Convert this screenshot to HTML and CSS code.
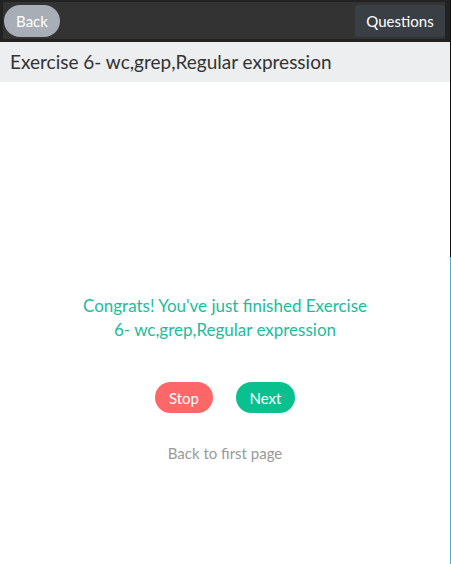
FILE: index.html
```html
<!DOCTYPE html>
<html>
<head>
<meta charset="utf-8">
<link rel="stylesheet" href="styles.css">
</head>
<body>
<div class="app">
  <header class="topbar">
    <button class="btn-back">Back</button>
    <button class="btn-questions">Questions</button>
  </header>
  <div class="titlebar">Exercise 6- wc,grep,Regular expression</div>
  <main class="content">
    <p class="congrats">Congrats! You've just finished Exercise 6- wc,grep,Regular expression</p>
    <div class="actions">
      <button class="pill stop">Stop</button>
      <button class="pill next">Next</button>
    </div>
    <a class="first-page">Back to first page</a>
  </main>
</div>
<div class="edge"></div>
</body>
</html>
```
FILE: styles.css
```css
html, body {
  margin: 0;
  padding: 0;
  background: #fff;
  font-family: Lato, "Open Sans", sans-serif;
}
.app {
  width: 450px;
}
.topbar {
  box-sizing: border-box;
  height: 42px;
  background: #333;
  border-style: solid;
  border-color: #222;
  border-width: 2px 5px 3px 3px;
  display: flex;
  justify-content: space-between;
  align-items: center;
  padding: 0 0 0 1px;
}
.topbar button {
  font-family: inherit;
  font-size: 15px;
  color: #fff;
  border: none;
  height: 32px;
  padding: 0;
  cursor: pointer;
}
.btn-back {
  width: 56px;
  background: #a7aeb5;
  border-radius: 16px;
}
.btn-questions {
  width: 90px;
  background: #3a3f46;
  border-radius: 3px;
}
.titlebar {
  height: 40px;
  box-sizing: border-box;
  background: #eceeef;
  color: #333;
  font-size: 19px;
  line-height: 40px;
  padding-left: 10px;
}
.content {
  display: flex;
  flex-direction: column;
  align-items: center;
  padding-top: 212px;
}
.congrats {
  margin: 0;
  width: 292px;
  text-align: center;
  color: #1bbc9b;
  font-size: 17px;
  line-height: 24px;
}
.actions {
  display: flex;
  gap: 23px;
  margin-top: 40px;
}
.pill {
  font-family: inherit;
  font-size: 15px;
  color: #fff;
  border: none;
  height: 31px;
  border-radius: 16px;
  padding: 0;
  cursor: pointer;
}
.stop {
  width: 58px;
  background: #fe6767;
}
.next {
  width: 59px;
  background: #0bc08f;
}
.first-page {
  margin-top: 31px;
  color: #999;
  font-size: 15px;
  line-height: 18px;
}
.edge {
  position: fixed;
  top: 0;
  right: 0;
  width: 1px;
  height: 100%;
  background: linear-gradient(#111 0, #111 257px, #4ab2df 257px);
}
```
